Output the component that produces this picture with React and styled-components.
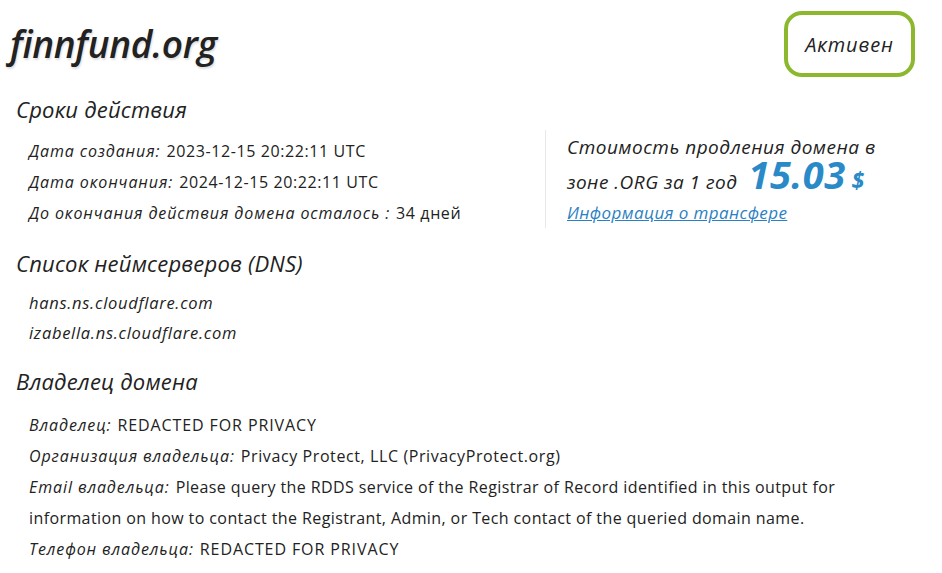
import React from "react";
import styled, { createGlobalStyle } from "styled-components";

const Global = createGlobalStyle`
  html, body { margin: 0; padding: 0; background: #fff; }
  body { font-family: "Open Sans", "Noto Sans", sans-serif; color: #222; }
  * { box-sizing: border-box; }
`;

const Page = styled.div`
  width: 942px;
  padding: 11px 27px 0 10px;
`;

const TopBar = styled.div`
  display: flex;
  justify-content: space-between;
  align-items: center;
`;

const Title = styled.h1`
  margin: 0;
  font-size: 37px;
  font-style: italic;
  font-weight: 600;
  letter-spacing: -0.3px;
  line-height: 44px;
  color: #222;
  text-shadow: 1px 2px 2px rgba(0, 0, 0, 0.13);
`;

const StatusBadge = styled.div`
  width: 131px;
  height: 66px;
  border: 4px solid #8cb82e;
  border-radius: 18px;
  display: flex;
  align-items: center;
  justify-content: center;
  font-size: 20px;
  letter-spacing: 0.9px;
  font-style: italic;
  color: #222;
`;

const SectionTitle = styled.h2`
  margin: ${(p) => p.$mt || 0}px 0 0 6px;
  font-size: 22px;
  letter-spacing: 0.2px;
  font-style: italic;
  font-weight: 400;
  line-height: 30px;
  color: #222;
`;

const TermsRow = styled.div`
  display: flex;
  margin-top: 6px;
`;

const LeftCol = styled.div`
  width: 535px;
  padding-top: 6px;
`;

const InfoList = styled.div`
  margin: ${(p) => p.$mt || 0}px 0 0 19px;
  max-width: 860px;
`;

const InfoLine = styled.div`
  font-size: 16px;
  line-height: 31px;
  color: #222;
`;

const Label = styled.span`
  font-style: italic;
  letter-spacing: 0.9px;
  margin-right: 6px;
`;

const Value = styled.span`
  letter-spacing: ${(p) => p.$ls ?? 0.4}px;
`;

const NsItem = styled.div`
  font-size: 16.5px;
  letter-spacing: 0.7px;
  font-style: italic;
  line-height: 30px;
`;

const PriceBox = styled.div`
  border-left: 1px solid #e8e8e8;
  height: 98px;
  padding: 2px 0 0 21px;
  font-style: italic;
`;

const PriceText = styled.div`
  font-size: 19px;
  letter-spacing: 0.5px;
  line-height: ${(p) => p.$lh}px;
  color: #222;
  white-space: nowrap;
`;

const PriceValue = styled.span`
  font-size: 38px;
  line-height: 20px;
  font-weight: 700;
  color: #2a8ac8;
  margin-left: 11px;
  letter-spacing: 0.5px;
`;

const Currency = styled.span`
  font-size: 23px;
  line-height: 20px;
  font-weight: 700;
  color: #2a8ac8;
  margin-left: 6px;
`;

const TransferLink = styled.a`
  display: block;
  font-size: 17px;
  letter-spacing: 0.4px;
  line-height: 22px;
  color: #2b7fc2;
  text-decoration: underline;
`;

export default function App() {
  return (
    <>
      <Global />
      <Page>
        <TopBar>
          <Title>finnfund.org</Title>
          <StatusBadge>Активен</StatusBadge>
        </TopBar>

        <SectionTitle $mt={17}>Сроки действия</SectionTitle>
        <TermsRow>
          <LeftCol>
            <InfoList>
              <InfoLine>
                <Label>Дата создания:</Label>
                <Value $ls={0.6}>2023-12-15 20:22:11 UTC</Value>
              </InfoLine>
              <InfoLine>
                <Label>Дата окончания:</Label>
                <Value $ls={0.6}>2024-12-15 20:22:11 UTC</Value>
              </InfoLine>
              <InfoLine>
                <Label>До окончания действия домена осталось :</Label>
                <Value $ls={0.6}>34 дней</Value>
              </InfoLine>
            </InfoList>
          </LeftCol>
          <PriceBox>
            <PriceText $lh={30}>Стоимость продления домена в</PriceText>
            <PriceText $lh={40}>
              зоне .ORG за 1 год<PriceValue>15.03</PriceValue>
              <Currency>$</Currency>
            </PriceText>
            <TransferLink href="#">Информация о трансфере</TransferLink>
          </PriceBox>
        </TermsRow>

        <SectionTitle $mt={19}>Список неймсерверов (DNS)</SectionTitle>
        <InfoList $mt={10}>
          <NsItem>hans.ns.cloudflare.com</NsItem>
          <NsItem>izabella.ns.cloudflare.com</NsItem>
        </InfoList>

        <SectionTitle $mt={18}>Владелец домена</SectionTitle>
        <InfoList $mt={14}>
          <InfoLine>
            <Label>Владелец:</Label>
            <Value $ls={0.9}>REDACTED FOR PRIVACY</Value>
          </InfoLine>
          <InfoLine>
            <Label>Организация владельца:</Label>
            <Value $ls={0.6}>Privacy Protect, LLC (PrivacyProtect.org)</Value>
          </InfoLine>
          <InfoLine>
            <Label>Email владельца:</Label>
            <Value>
              Please query the RDDS service of the Registrar of Record identified in this output for information on how to contact the Registrant, Admin, or Tech contact of the queried domain name.
            </Value>
          </InfoLine>
          <InfoLine>
            <Label>Телефон владельца:</Label>
            <Value $ls={0.9}>REDACTED FOR PRIVACY</Value>
          </InfoLine>
        </InfoList>
      </Page>
    </>
  );
}
